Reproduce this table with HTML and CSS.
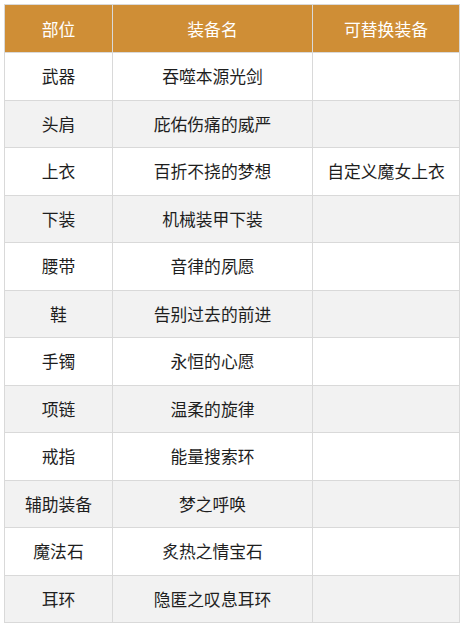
FILE: index.html
```html
<!DOCTYPE html>
<html lang="zh">
<head>
<meta charset="utf-8">
<link rel="stylesheet" href="styles.css">
</head>
<body>
<table class="gear">
  <colgroup>
    <col class="c1"><col class="c2"><col class="c3">
  </colgroup>
  <thead>
    <tr><th>部位</th><th>装备名</th><th>可替换装备</th></tr>
  </thead>
  <tbody>
    <tr><td>武器</td><td>吞噬本源光剑</td><td></td></tr>
    <tr><td>头肩</td><td>庇佑伤痛的威严</td><td></td></tr>
    <tr><td>上衣</td><td>百折不挠的梦想</td><td>自定义魔女上衣</td></tr>
    <tr><td>下装</td><td>机械装甲下装</td><td></td></tr>
    <tr><td>腰带</td><td>音律的夙愿</td><td></td></tr>
    <tr><td>鞋</td><td>告别过去的前进</td><td></td></tr>
    <tr><td>手镯</td><td>永恒的心愿</td><td></td></tr>
    <tr><td>项链</td><td>温柔的旋律</td><td></td></tr>
    <tr><td>戒指</td><td>能量搜索环</td><td></td></tr>
    <tr><td>辅助装备</td><td>梦之呼唤</td><td></td></tr>
    <tr><td>魔法石</td><td>炙热之情宝石</td><td></td></tr>
    <tr><td>耳环</td><td>隐匿之叹息耳环</td><td></td></tr>
  </tbody>
</table>
</body>
</html>
```
FILE: styles.css
```css
html, body {
  margin: 0;
  padding: 0;
  background: #ffffff;
}
body {
  padding: 4px;
  font-family: "Noto Sans CJK SC", "Noto Sans", sans-serif;
  color: #1e1e1e;
}
.gear {
  border-collapse: collapse;
  table-layout: fixed;
  width: 455px;
}
.c1 { width: 108px; }
.c2 { width: 200px; }
.c3 { width: 147px; }
.gear th, .gear td {
  border: 1px solid #d9d9d9;
  text-align: center;
  vertical-align: middle;
  padding: 0;
  font-size: 16.8px;
  line-height: 20px;
}
.gear th {
  background: #cf8e36;
  color: #ffffff;
  font-weight: normal;
  height: 47px;
}
.gear td {
  height: 46.5px;
}
.gear tbody tr:nth-child(even) td {
  background: #f2f2f2;
}
```
